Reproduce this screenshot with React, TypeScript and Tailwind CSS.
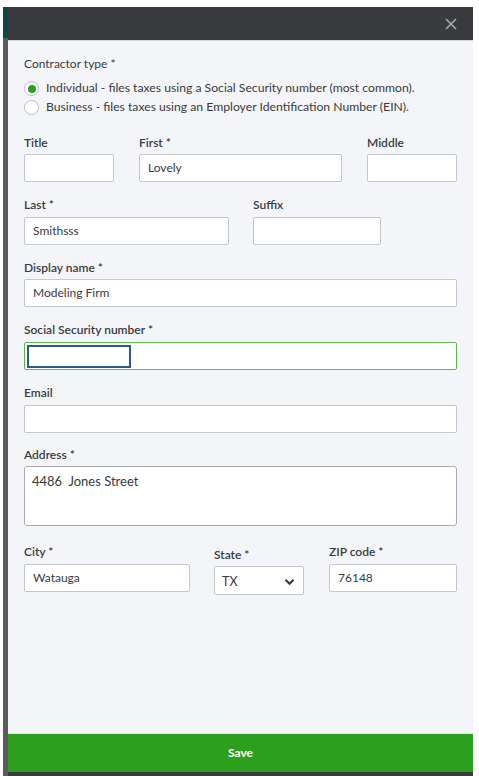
import React from 'react';

const font = { fontFamily: 'Lato, "Open Sans", "Liberation Sans", sans-serif' };

function Label({ children, bold = true }: { children: React.ReactNode; bold?: boolean }) {
  return (
    <div className={`text-[12px] leading-4 text-[#393a3d] ${bold ? 'font-semibold' : 'font-normal'}`}>
      {children}
    </div>
  );
}

function Input({ value = '', className = '' }: { value?: string; className?: string }) {
  return (
    <div
      className={`h-[28px] rounded-[2px] border border-[#c4c7cc] bg-white px-[8px] flex items-center text-[12px] text-[#393a3d] ${className}`}
    >
      {value}
    </div>
  );
}

function Radio({ checked, label }: { checked?: boolean; label: string }) {
  return (
    <div className="flex items-center h-[19px] gap-[7px]">
      <div className="w-[15px] h-[15px] rounded-full border border-[#babec5] bg-white flex items-center justify-center">
        {checked && <div className="w-[8px] h-[8px] rounded-full bg-[#2ca01c]" />}
      </div>
      <span className="text-[12.2px] text-[#393a3d]">{label}</span>
    </div>
  );
}

export default function App() {
  return (
    <div className="w-[479px] h-[776px] bg-white flex flex-col" style={font}>
      <div className="h-[7px]" />
      <div className="flex flex-1">
        {/* page edge behind the drawer */}
        <div className="w-[3px]" />
        <div className="w-[5px] flex flex-col">
          <div className="h-[31px] bg-[#0b4a44]" />
          <div className="flex-1 bg-[#5c5c5c]" />
        </div>

        <div className="w-[465px] flex flex-col">
          {/* header */}
          <div className="h-[34px] bg-[#393a3d] flex items-center justify-end pr-[16px] border-b border-[#d4d7dc]">
            <svg width="12" height="12" viewBox="0 0 12 12">
              <path d="M1 1L11 11M11 1L1 11" stroke="#a7a9ad" strokeWidth="1.6" />
            </svg>
          </div>

          {/* form */}
          <div className="flex-1 bg-[#f4f5f8] px-[16px] pt-[15px]">
            <Label bold={false}>Contractor type *</Label>
            <div className="mt-[7px] flex flex-col">
              <Radio checked label="Individual - files taxes using a Social Security number (most common)." />
              <Radio label="Business - files taxes using an Employer Identification Number (EIN)." />
            </div>

            <div className="mt-[18px] flex">
              <div className="w-[90px]">
                <Label>Title</Label>
                <Input className="mt-[3px]" />
              </div>
              <div className="w-[203px] ml-[25px]">
                <Label>First *</Label>
                <Input className="mt-[3px]" value="Lovely" />
              </div>
              <div className="w-[90px] ml-[25px]">
                <Label>Middle</Label>
                <Input className="mt-[3px]" />
              </div>
            </div>

            <div className="mt-[15px] flex">
              <div className="w-[205px]">
                <Label>Last *</Label>
                <Input className="mt-[4px]" value="Smithsss" />
              </div>
              <div className="w-[128px] ml-[24px]">
                <Label>Suffix</Label>
                <Input className="mt-[4px]" />
              </div>
            </div>

            <div className="mt-[15px]">
              <Label>Display name *</Label>
              <Input className="mt-[3px]" value="Modeling Firm" />
            </div>

            <div className="mt-[15px]">
              <Label>Social Security number *</Label>
              <div className="mt-[4px] h-[28px] rounded-[2px] border border-[#5bb84a] bg-white flex items-center pl-[2px]">
                <div className="w-[104px] h-[23px] border-2 border-[#2d5a8e] bg-white" />
              </div>
            </div>

            <div className="mt-[15px]">
              <Label>Email</Label>
              <Input className="mt-[4px]" />
            </div>

            <div className="mt-[14px]">
              <Label>Address *</Label>
              <div className="mt-[3px] h-[60px] rounded-[3px] border border-[#a9acb1] bg-white px-[7px] pt-[5px] text-[13px] text-[#393a3d] whitespace-pre">
                4486  Jones Street
              </div>
            </div>

            <div className="mt-[18px] flex items-start">
              <div className="w-[166px]">
                <Label>City *</Label>
                <Input className="mt-[4px]" value="Watauga" />
              </div>
              <div className="w-[90px] ml-[24px] mt-[3px]">
                <Label>State *</Label>
                <div className="mt-[3px] h-[29px] rounded-[2px] border border-[#c4c7cc] bg-white pl-[7px] pr-[8px] flex items-center justify-between text-[12.5px] text-[#393a3d]">
                  <span className="mt-[3px]">TX</span>
                  <svg width="11" height="8" viewBox="0 0 11 8" className="mt-[2px]">
                    <path d="M1.5 1.8L5.5 5.8L9.5 1.8" fill="none" stroke="#393a3d" strokeWidth="2.2" />
                  </svg>
                </div>
              </div>
              <div className="w-[128px] ml-[25px]">
                <Label>ZIP code *</Label>
                <Input className="mt-[4px]" value="76148" />
              </div>
            </div>
          </div>

          {/* footer */}
          <div className="h-[39px] bg-[#2ca01c] border-t border-[#e3e5e8] flex items-center justify-center text-white text-[12px] font-bold">
            Save
          </div>
          <div className="h-[4px] bg-[#393a3d]" />
        </div>
        <div className="flex-1" />
      </div>
    </div>
  );
}
